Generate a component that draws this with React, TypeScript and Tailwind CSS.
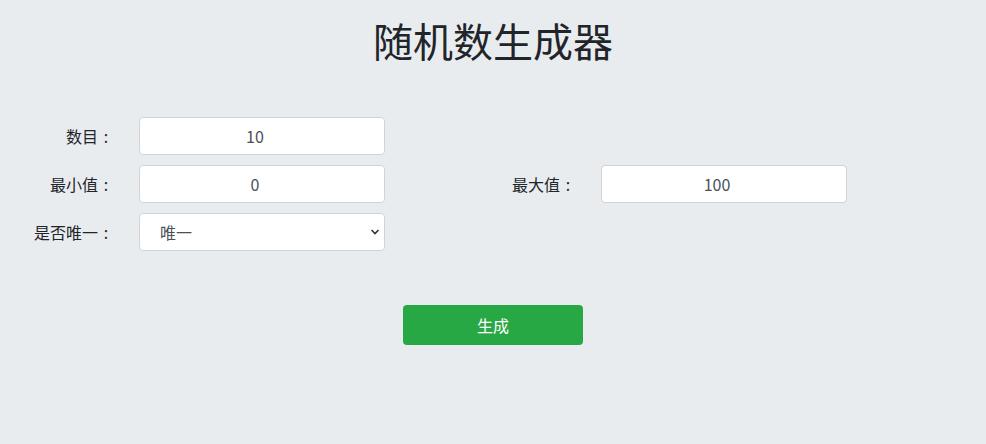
import React from "react";

const font = { fontFamily: '"Noto Sans CJK SC", "Noto Sans", sans-serif' };

function Field({ label, children }: { label: string; children: React.ReactNode }) {
  return (
    <div className="flex w-[462px] items-center">
      <label className="w-[114px] text-right text-[16px] text-[#212529]">
        {label}
        <span className="inline-block w-[16px] text-center">:</span>
      </label>
      <div className="ml-[25px] w-[246px]">{children}</div>
    </div>
  );
}

const inputCls =
  "block h-[38px] w-full rounded-[4px] border border-[#ced4da] bg-white pl-[12px] pr-[26px] text-center text-[16px] text-[#495057] outline-none";

export default function App() {
  return (
    <div className="min-h-[444px] w-full bg-[#e9ecef]" style={font}>
      <h1 className="pt-[16px] text-center text-[40px] leading-[48px] font-normal text-[#212529]">
        随机数生成器
      </h1>

      <div className="mt-[53px] flex flex-col gap-[10px]">
        <div className="flex">
          <Field label="数目">
            <input className={inputCls} defaultValue="10" />
          </Field>
        </div>
        <div className="flex">
          <Field label="最小值">
            <input className={inputCls} defaultValue="0" />
          </Field>
          <Field label="最大值">
            <input className={inputCls} defaultValue="100" />
          </Field>
        </div>
        <div className="flex">
          <Field label="是否唯一">
            <div className="relative">
              <select className="block h-[38px] w-full appearance-none rounded-[4px] border border-[#ced4da] bg-white pl-[20px] text-[16px] text-[#495057] outline-none">
                <option>唯一</option>
                <option>不唯一</option>
              </select>
              <svg
                className="pointer-events-none absolute right-[5px] top-[15px]"
                width="10"
                height="8"
                viewBox="0 0 10 8"
              >
                <path d="M1.5 2 L5 5.5 L8.5 2" fill="none" stroke="#333" strokeWidth="1.6" />
              </svg>
            </div>
          </Field>
        </div>
      </div>

      <div className="mt-[54px] flex justify-center">
        <button className="h-[40px] w-[180px] rounded-[4px] bg-[#28a745] text-[16px] text-white">
          生成
        </button>
      </div>
    </div>
  );
}
